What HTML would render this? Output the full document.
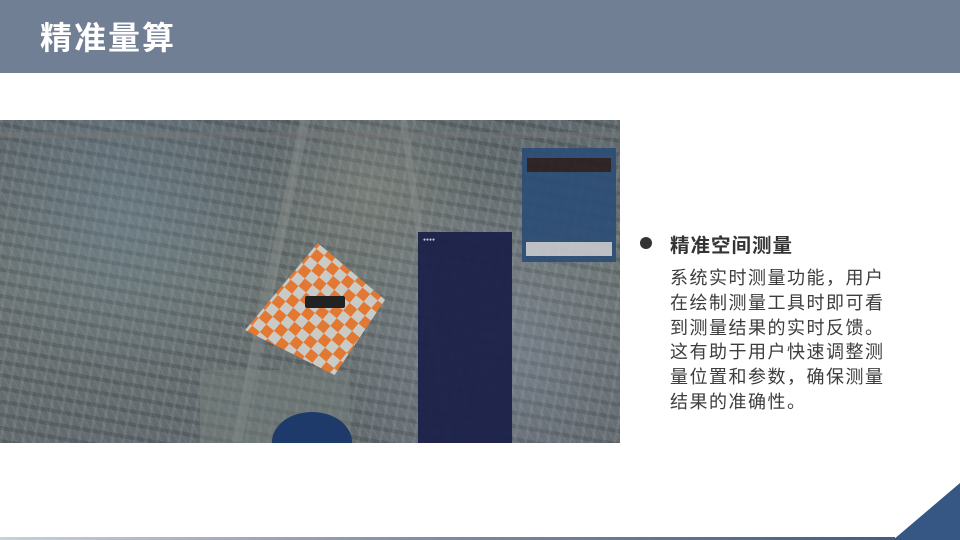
<!DOCTYPE html>
<html><head><meta charset="utf-8"><style>
*{margin:0;padding:0;box-sizing:border-box}
body{width:960px;height:540px;position:relative;overflow:hidden;background:#fff;font-family:"Liberation Sans","Noto Sans CJK SC",sans-serif}
.hdr{position:absolute;left:0;top:0;width:960px;height:73px;background:#717f94}
.hdr h1{position:absolute;left:40px;top:19px;color:#fff;font-size:32px;font-weight:bold;letter-spacing:2px;line-height:38px}
.map{position:absolute;left:0;top:120px;width:620px;height:323px;overflow:hidden;
background:
radial-gradient(circle at 20% 30%,rgba(120,150,170,.35),transparent 30%),
radial-gradient(circle at 80% 70%,rgba(150,160,190,.35),transparent 30%),
radial-gradient(circle at 60% 20%,rgba(170,170,150,.3),transparent 25%),
repeating-linear-gradient(100deg,rgba(255,255,255,.07) 0 3px,transparent 3px 11px),
repeating-linear-gradient(10deg,rgba(0,0,0,.14) 0 4px,transparent 4px 13px),
repeating-linear-gradient(60deg,rgba(150,170,190,.12) 0 2px,transparent 2px 7px),
linear-gradient(180deg,#5f686c,#6c7472 50%,#636a6e);}
.road{position:absolute;background:#8a8f8c;opacity:.45}
.chk{position:absolute;left:245px;top:123px;width:140px;height:132px;overflow:hidden;clip-path:polygon(52% 0,100% 43%,64% 100%,0 66%)}
.chk div{position:absolute;left:-40px;top:-40px;width:220px;height:220px;transform:rotate(40deg);
background:repeating-conic-gradient(#e8782e 0 25%,#cfcfca 0 50%) 0 0/20px 20px;opacity:.95}
.pan{position:absolute;left:418px;top:112px;width:94px;height:211px;background:#1b2149;opacity:.95}
.pan2{position:absolute;left:522px;top:28px;width:94px;height:114px;background:#2c4d77;opacity:.9}
.dot{position:absolute;left:640px;top:237px;width:12px;height:12px;border-radius:50%;background:#333}
h2{position:absolute;left:670px;top:229px;font-size:19.5px;font-weight:bold;color:#333;letter-spacing:1px}
.body{position:absolute;left:670px;top:266px;font-size:18px;line-height:24.8px;color:#3d3d3d;letter-spacing:1.5px;white-space:nowrap}
.tri{position:absolute;right:0;bottom:0;width:0;height:0;border-left:67px solid transparent;border-bottom:57px solid #365784}
.line{position:absolute;left:0;bottom:0;width:895px;height:3px;background:linear-gradient(90deg,#c9d0da,#7f8aa0 50%,#465c80)}
</style></head><body>
<div class="hdr"><h1>精准量算</h1></div>
<div class="map">
<div class="road" style="left:300px;top:0;width:10px;height:330px;transform:rotate(12deg);transform-origin:top"></div>
<div class="road" style="left:400px;top:0;width:7px;height:330px;transform:rotate(-8deg);transform-origin:top"></div>
<div class="road" style="left:0;top:12px;width:620px;height:6px;background:#777"></div>
<div class="road" style="left:200px;top:250px;width:150px;height:73px;background:#7a8580"></div>
<div style="position:absolute;left:272px;top:292px;width:80px;height:60px;border-radius:50%;background:#1e3a6a"></div>
<div class="chk"><div></div></div>
<div style="position:absolute;left:305px;top:176px;width:40px;height:12px;background:#222;border-radius:2px"></div>
<div class="pan">
<div style="color:#ccd;font-size:5px;padding:5px">●●●●</div>
</div>
<div class="pan2">
<div style="margin:10px 5px 0;height:14px;background:#2a1e1e"></div>
<div style="position:absolute;left:4px;top:94px;width:86px;height:14px;background:#c7c9cc"></div>
</div>
</div>
<div class="dot"></div>
<h2>精准空间测量</h2>
<div class="body">系统实时测量功能，用户<br>在绘制测量工具时即可看<br>到测量结果的实时反馈。<br>这有助于用户快速调整测<br>量位置和参数，确保测量<br>结果的准确性。</div>
<div class="line"></div>
<div class="tri"></div>
</body></html>
